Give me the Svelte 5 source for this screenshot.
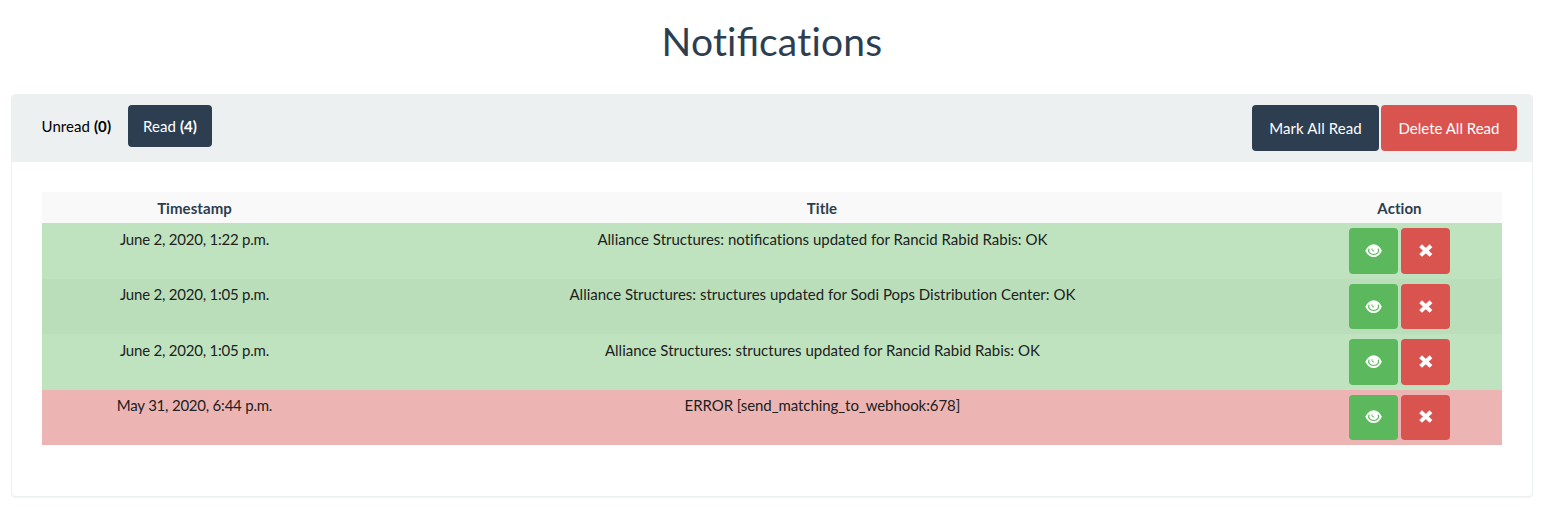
<script>
  const rows = [
    { time: 'June 2, 2020, 1:22 p.m.', title: 'Alliance Structures: notifications updated for Rancid Rabid Rabis: OK', kind: 'success' },
    { time: 'June 2, 2020, 1:05 p.m.', title: 'Alliance Structures: structures updated for Sodi Pops Distribution Center: OK', kind: 'success alt' },
    { time: 'June 2, 2020, 1:05 p.m.', title: 'Alliance Structures: structures updated for Rancid Rabid Rabis: OK', kind: 'success' },
    { time: 'May 31, 2020, 6:44 p.m.', title: 'ERROR [send_matching_to_webhook:678]', kind: 'danger error' },
  ];
  // only the "fi" pair is joined; every other ligature stays off
  const parts = (text) => text.split(/(fi)/);
</script>

{#snippet words(text)}{#each parts(text) as part}{#if part === 'fi'}<span class="joined">{part}</span>{:else}{part}{/if}{/each}{/snippet}

<main>
  <h1>{@render words('Notifications')}</h1>
  <section class="panel">
    <header class="heading">
      <nav class="pills">
        <span class="pill">Unread <b>(0)</b></span>
        <span class="pill active">Read <b>(4)</b></span>
      </nav>
      <div class="bulk">
        <button class="btn primary">Mark All Read</button>
        <button class="btn red">Delete All Read</button>
      </div>
    </header>
    <div class="body">
      <div class="row head">
        <div>Timestamp</div>
        <div>Title</div>
        <div>Action</div>
      </div>
      {#each rows as row}
        <div class="row {row.kind}">
          <div class="time">{row.time}</div>
          <div class="title">{@render words(row.title)}</div>
          <div class="actions">
            <button class="btn icon green" aria-label="View">
              <svg width="17" height="14" viewBox="0 0 17 14">
                <path fill="#fff" d="M.3 6.700C2.400 2.700 5.200.300 8.700.300s6.200 2.400 8.200 6.400c-2 4-4.700 6.400-8.200 6.400S2.400 10.700.3 6.700Z" />
                <path d="M4.200 4.600C2.500 7.600 5 10.500 8.700 10.500s6.100-2.900 4.400-5.900" fill="none" stroke="#5cb85c" stroke-width="1.200" />
                <path d="M7.100 4.400c-.5 1.700.3 2.900 2 2.500" fill="none" stroke="#5cb85c" stroke-width="1" />
              </svg>
            </button>
            <button class="btn icon red" aria-label="Delete">
              <svg width="17" height="14" viewBox="0 0 17 14">
                <path d="m3.600 1.800 10.400 9.600M14 1.800 3.600 11.400" fill="none" stroke="#fff" stroke-width="4" />
              </svg>
            </button>
          </div>
        </div>
      {/each}
    </div>
  </section>
</main>

<style>
  :global(body) {
    background: #fff;
  }
  main {
    box-sizing: border-box;
    height: 508px;
    padding: 20px 13px 0 11px;
    font: 15px/21.43px Lato, sans-serif;
    font-variant-ligatures: none;
    color: #2c3e50;
    overflow: hidden;
  }
  .joined {
    font-variant-ligatures: normal;
    letter-spacing: 0;
  }
  h1 {
    margin: 0 0 31px;
    font-size: 39px;
    line-height: 43px;
    font-weight: 400;
    letter-spacing: 0.22px;
    text-align: center;
  }
  .panel {
    box-sizing: border-box;
    height: 403px;
    border: 1px solid #ecf0f1;
    border-radius: 4px;
    box-shadow: 0 1px 1px rgba(0, 0, 0, 0.05);
  }
  .heading {
    box-sizing: border-box;
    display: flex;
    justify-content: space-between;
    align-items: flex-start;
    height: 67px;
    padding: 10px 15px;
    background: #ecf0f1;
    border-radius: 3px 3px 0 0;
  }
  .pills {
    display: flex;
    gap: 2px;
  }
  .pill {
    box-sizing: border-box;
    height: 42px;
    padding: 11px 14.5px 9px;
    color: #000;
    border-radius: 4px;
    white-space: nowrap;
    letter-spacing: 0.07px;
    width: 99px;
  }
  .pill.active {
    width: 84px;
    padding-left: 15px;
    color: #fff;
    background: #2c3e50;
  }
  .bulk {
    display: flex;
    gap: 2px;
  }
  .btn {
    box-sizing: border-box;
    margin: 0;
    border: 0;
    border-radius: 4px;
    font: inherit;
    font-variant-ligatures: none;
    color: #fff;
    height: 46px;
    padding: 2px 0 0;
    width: 136px;
    white-space: nowrap;
  }
  .primary {
    width: 127px;
    letter-spacing: 0.1px;
    background: #2c3e50;
  }
  .red {
    background: #d9534f;
  }
  .green {
    background: #5cb85c;
  }
  .body {
    padding: 30px;
  }
  .row {
    box-sizing: border-box;
    display: grid;
    grid-template-columns: 305px 1fr 205px;
    height: 55.43px;
    padding-top: 5px;
    text-align: center;
    color: #212121;
  }
  .row.head {
    height: 31.43px;
    padding-top: 6px;
    font-weight: 700;
    letter-spacing: 0.06px;
    color: #2c3e50;
    background: #f9f9f9;
  }
  .time,
  .title {
    padding-top: 0.6px;
  }
  .time {
    letter-spacing: -0.22px;
  }
  .title {
    padding-left: 0.8px;
  }
  .error .title {
    letter-spacing: -0.07px;
  }
  .success {
    background: #bfe3bf;
  }
  .alt {
    background: #badeba;
  }
  .danger {
    background: #ecb5b4;
  }
  .actions {
    display: flex;
    justify-content: center;
    align-items: flex-start;
    gap: 3px;
  }
  .icon {
    display: flex;
    align-items: center;
    justify-content: center;
    width: 49px;
    height: 45.43px;
    padding: 0;
  }
  svg {
    display: block;
  }
</style>
